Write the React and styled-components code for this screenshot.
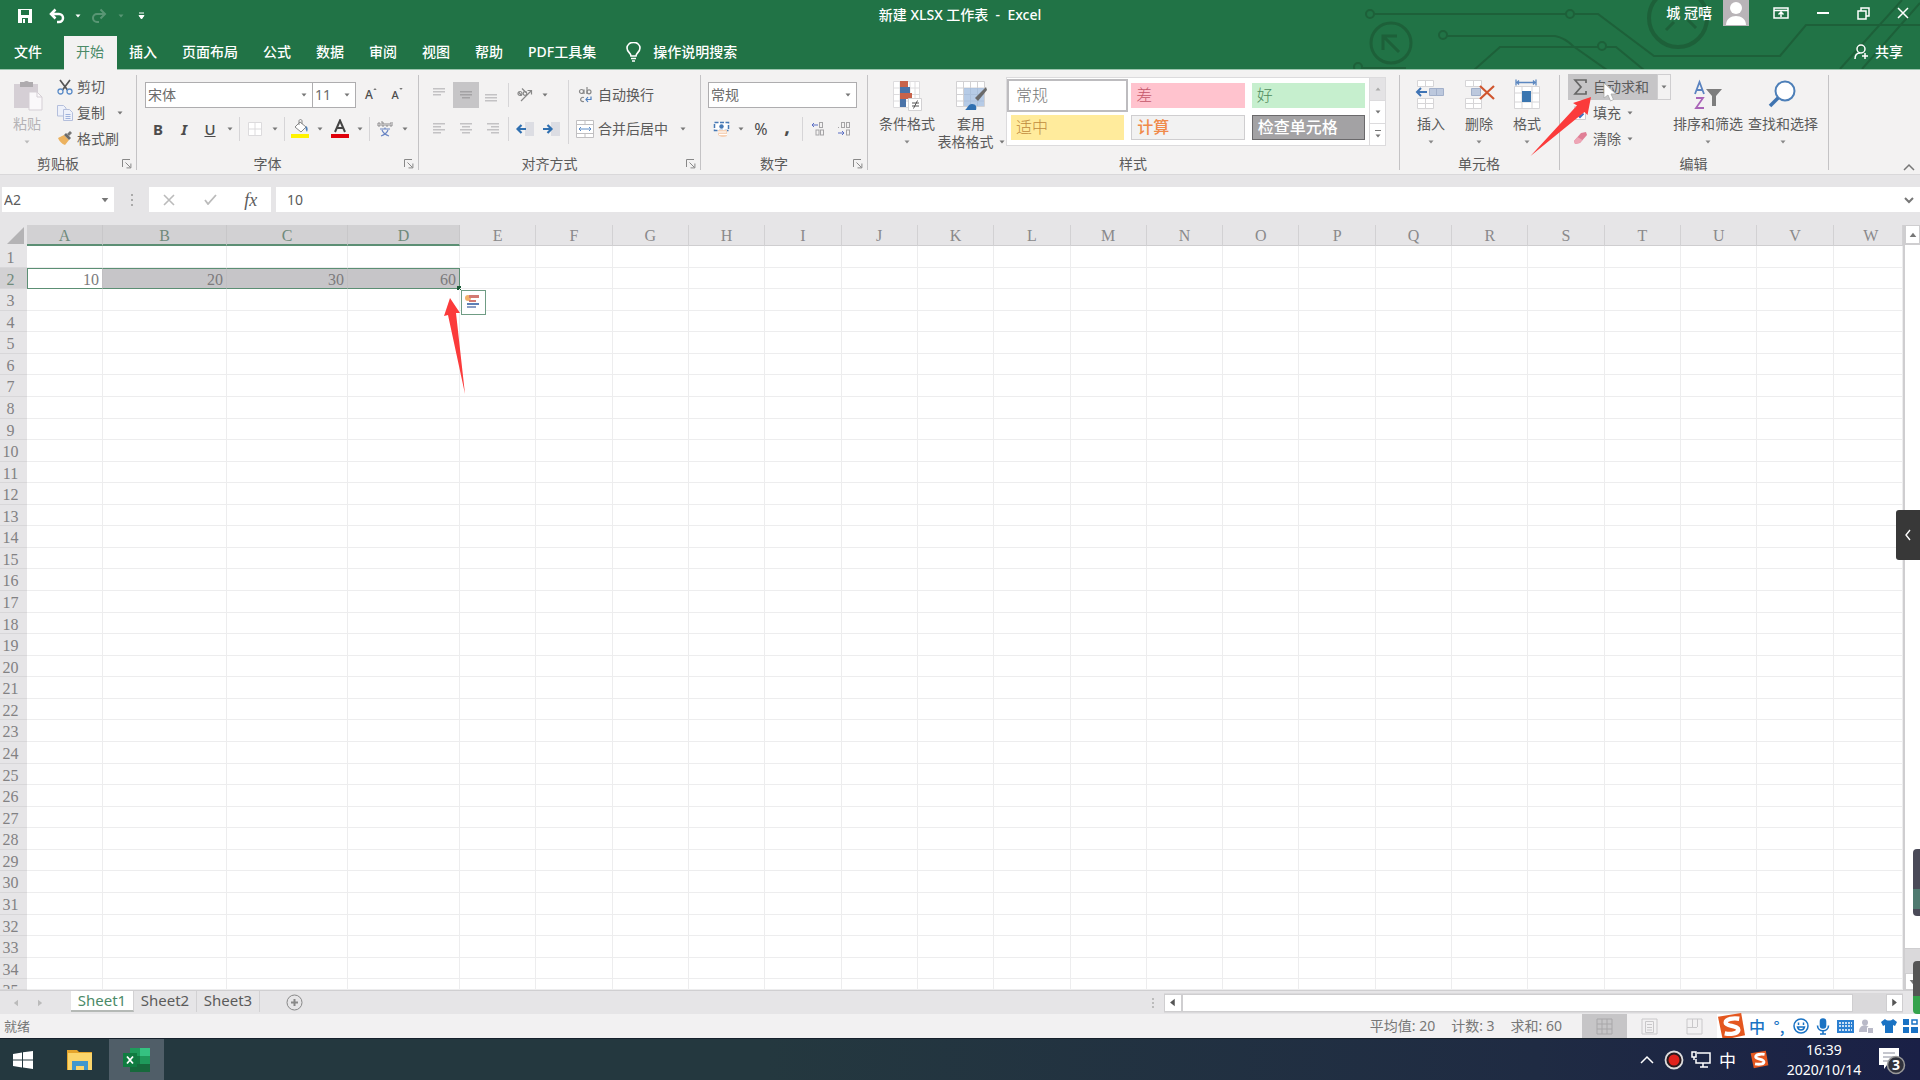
import React from "react";
import styled, { createGlobalStyle, css } from "styled-components";

const ui = '"Noto Sans", "Noto Sans CJK SC", sans-serif';
const song = '"Liberation Serif", "Noto Sans CJK SC", serif';
const green = "#217346";

const Global = createGlobalStyle`
  * { box-sizing: border-box; }
  html, body { margin: 0; height: 100%; overflow: hidden; }
  body { font: 14px/20px ${ui}; color: #5b5b5b; background: #e6e6e6; }
  button, input, select {
    font: inherit; color: inherit; border: 0; padding: 0; margin: 0;
    background: none; border-radius: 0; outline: none;
  }
  svg { display: block; flex: none; }
`;

const Window = styled.div`
  height: 100vh;
  display: flex;
  flex-direction: column;
  overflow: hidden;
`;

/* ---------- title and tabs ---------- */
const Header = styled.header`
  position: relative;
  height: 70px;
  flex: none;
  background: ${green};
  color: #fff;
  border-bottom: 1px solid #9cc5ae;
`;
const Circuit = styled.svg`
  position: absolute;
  right: 0;
  top: 0;
`;
const TitleBar = styled.div`
  position: relative;
  height: 36px;
  display: grid;
  grid-template-columns: 1fr auto 1fr;
`;
const QuickTools = styled.div`
  display: flex;
  align-items: center;
  height: 32px;
  padding-left: 13px;
`;
const QuickButton = styled.button`
  width: ${(p) => p.$w || 24}px;
  height: 24px;
  display: flex;
  align-items: center;
  justify-content: center;
  opacity: ${(p) => (p.disabled ? 0.25 : 1)};
  color: #fff;
`;
const Title = styled.h1`
  margin: 0;
  font: 500 14px/30px ${ui};
  white-space: pre;
`;
const WindowTools = styled.div`
  display: flex;
  justify-content: flex-end;
`;
const User = styled.span`
  line-height: 26px;
  font-weight: 500;
  margin-right: 11px;
`;
const WindowButton = styled.button`
  width: ${(p) => p.$w || 41}px;
  height: 26px;
  display: flex;
  align-items: center;
  justify-content: center;
`;
const TabBar = styled.nav`
  position: relative;
  height: 34px;
  display: flex;
`;
const Tab = styled.button`
  padding: 0 13px 2px 12px;
  font-weight: 500;
  white-space: nowrap;
  color: #fff;
  ${(p) => p.$file && css`width: 64px; padding: 0 0 2px 14px; text-align: left;`}
  ${(p) => p.$active && css`background: #f3f2f2; color: #4b8a68; font-weight: 400;`}
`;
const Search = styled.button`
  display: flex;
  align-items: center;
  gap: 12px;
  padding: 0 0 2px 17px;
  font-weight: 500;
  color: #fff;
`;
const Share = styled.button`
  display: flex;
  align-items: center;
  gap: 6px;
  margin-left: auto;
  padding: 0 17px 2px 0;
  font-weight: 500;
  color: #fff;
`;

/* ---------- ribbon ---------- */
const Ribbon = styled.section`
  position: relative;
  flex: none;
  height: 105px;
  display: flex;
  background: #f3f2f2;
  border-bottom: 1px solid #d9d8da;
`;
const Group = styled.div`
  width: ${(p) => p.$w}px;
  padding-left: ${(p) => p.$pad || 0}px;
  flex: none;
  position: relative;
  display: grid;
  grid-template-rows: 84px 20px;
  &::after {
    content: "";
    position: absolute;
    right: 0;
    top: 5px;
    bottom: 4px;
    width: 1px;
    background: #c4c3c5;
  }
`;
const GroupBody = styled.div`
  display: flex;
  align-items: flex-start;
`;
const GroupFoot = styled.div`
  display: flex;
  align-items: center;
  margin-left: ${(p) => -(p.$pad || 0)}px;
  padding-right: 2px;
`;
const GroupName = styled.span`
  flex: 1;
  text-align: center;
  padding-right: ${(p) => (p.$launch ? 3 : 0)}px;
`;
const Launcher = styled.button`
  width: 16px;
  height: 16px;
  display: flex;
  align-items: center;
  justify-content: center;
`;
const SmallStack = styled.div`
  padding-top: 4px;
  display: flex;
  flex-direction: column;
  align-items: flex-start;
`;
const SmallRow = styled.div`
  display: flex;
  height: 26px;
`;
const SmallButton = styled.button`
  display: flex;
  align-items: center;
  gap: 4px;
  height: 26px;
  padding: 0 ${(p) => p.$end || 2}px 0 3px;
  white-space: nowrap;
  background: ${(p) => (p.$active ? "#c6c5c7" : "none")};
`;
const SplitArrow = styled.button`
  width: 14px;
  height: 26px;
  border: 1px solid #cfced0;
  display: flex;
  align-items: center;
  justify-content: center;
`;
const BigButton = styled.button`
  width: ${(p) => p.$w}px;
  padding-top: 9px;
  display: flex;
  flex-direction: column;
  align-items: center;
  line-height: 18px;
  white-space: nowrap;
  color: ${(p) => (p.disabled ? "#b5b3b6" : "#5b5b5b")};
  & > svg { margin-bottom: 4px; }
`;
const BigLine = styled.span`
  height: 18px;
  display: flex;
  align-items: center;
  gap: 5px;
`;
const Rows = styled.div`
  padding-top: 12px;
  display: flex;
  flex-direction: column;
  gap: 8px;
`;
const ToolRow = styled.div`
  display: flex;
  align-items: center;
  height: 26px;
`;
const Tool = styled.button`
  width: ${(p) => p.$w || 26}px;
  height: 26px;
  display: flex;
  align-items: center;
  justify-content: center;
  background: ${(p) => (p.$active ? "#c6c5c7" : "none")};
  font: ${(p) => p.$font || "400 16px/20px"} ${ui};
  color: #4c4c4c;
  padding-bottom: ${(p) => p.$lift || 0}px;
`;
const SizeMark = styled.span`
  align-self: flex-start;
  padding-top: 5px;
`;
const Sep = styled.i`
  width: 1px;
  height: 24px;
  margin: 0 ${(p) => p.$m || 2}px;
  background: #d6d5d7;
`;
const TallSep = styled.i`
  width: 1px;
  height: 64px;
  margin: 10px 4px 0;
  background: #d6d5d7;
`;
const SelectBox = styled.div`
  width: ${(p) => p.$w}px;
  height: 26px;
  border: 1px solid #aeadaf;
  background: #fff;
  display: grid;
  align-items: center;
  & > * { grid-area: 1 / 1; }
  & > svg { justify-self: end; margin-right: 5px; pointer-events: none; }
  & + & { border-left-width: 0; }
`;
const Select = styled.select`
  appearance: none;
  width: 100%;
  height: 24px;
  padding-left: 2px;
  color: #6b6b6b;
`;
const Gallery = styled.div`
  width: 380px;
  height: 69px;
  margin: 7px 0 0 2px;
  border: 1px solid #dcdbdd;
  background: #fff;
  display: flex;
`;
const GalleryGrid = styled.div`
  flex: 1;
  padding: 5px 4px;
  display: grid;
  grid-template-columns: repeat(3, 1fr);
  grid-template-rows: repeat(2, 25px);
  gap: 7px;
`;
const StyleCell = styled.button`
  text-align: left;
  padding-left: 5px;
  font: 300 16px/22px ${song};
  white-space: nowrap;
  background: ${(p) => p.$bg};
  color: ${(p) => p.$fg};
  font-weight: ${(p) => (p.$bold ? 500 : 300)};
  border: ${(p) => (p.$line ? `1px solid ${p.$line}` : 0)};
  ${(p) => p.$active && css`outline: 2px solid #bdbcbf; outline-offset: 2px;`}
`;
const GalleryScroll = styled.div`
  width: 16px;
  display: grid;
  grid-template-rows: repeat(3, 1fr);
  border-left: 1px solid #dcdbdd;
`;
const ScrollStep = styled.button`
  display: flex;
  flex-direction: column;
  align-items: center;
  justify-content: center;
  gap: 2px;
  background: ${(p) => (p.disabled ? "#e4e3e5" : "#fff")};
  & + & { border-top: 1px solid #dcdbdd; }
`;
const Collapse = styled.button`
  position: absolute;
  right: 2px;
  bottom: 0;
  width: 16px;
  height: 14px;
`;

/* ---------- formula bar ---------- */
const FormulaBar = styled.div`
  flex: none;
  height: 50px;
  padding: 12px 0 13px 2px;
  display: flex;
  background: #e6e5e7;
`;
const NameBox = styled.label`
  width: 112px;
  background: #fff;
  display: flex;
  align-items: center;
  padding: 0 5px 0 2px;
  & input { flex: 1; min-width: 0; }
`;
const Dots = styled.div`
  width: ${(p) => p.$w || 35}px;
  display: flex;
  align-items: center;
  justify-content: center;
`;
const FormulaTools = styled.div`
  width: 122px;
  margin-right: 5px;
  background: #fff;
  display: flex;
`;
const FormulaTool = styled.button`
  flex: 1;
  display: flex;
  align-items: center;
  justify-content: center;
  font: italic 18px/24px "Liberation Serif", serif;
`;
const FormulaField = styled.label`
  flex: 1;
  background: #fff;
  display: flex;
  align-items: center;
  padding: 0 5px 0 11px;
  & input { flex: 1; }
`;

/* ---------- sheet ---------- */
const SheetArea = styled.main`
  flex: 1;
  min-height: 0;
  display: flex;
  background: #e6e5e7;
`;
const SheetTable = styled.table`
  flex: 1;
  min-width: 0;
  display: grid;
  grid-template-rows: 21px minmax(0, 1fr);
  font: 16px/20px ${song};
  color: #828183;
  overflow: hidden;
  background: #fff;
`;
const columns = css`
  display: grid;
  grid-template-columns: 27px 76px 124px 121px 112px repeat(18, minmax(0, 11fr)) minmax(0, 10fr);
`;
const HeadGroup = styled.thead`display: block;`;
const HeadRow = styled.tr`
  ${columns}
  grid-template-rows: 21px;
`;
const ColHead = styled.th`
  padding: 2px 0 0;
  font-weight: 400;
  line-height: 17px;
  text-align: center;
  background: ${(p) => (p.$sel ? "#d2d1d3" : "#e6e5e7")};
  color: ${(p) => (p.$sel ? "#6f8a7b" : "#8a898b")};
  border-right: 1px solid ${(p) => (p.$sel ? "#c8c7c9" : "#d2d1d3")};
  border-bottom: ${(p) => (p.$sel ? "2px solid #5c8f74" : "1px solid #cfced0")};
  &:last-child { padding-left: 6px; }
`;
const Corner = styled.th`
  padding: 2px 2px 0 7px;
  background: #e6e5e7;
`;
const Body = styled.tbody`
  display: grid;
  grid-template-rows: repeat(34, minmax(0, 2fr)) minmax(0, 1fr);
  min-height: 0;
`;
const BodyRow = styled.tr`
  ${columns}
  grid-template-rows: 100%;
  min-height: 0;
`;
const RowHead = styled.th`
  padding: 0 6px 0 0;
  font-weight: 400;
  text-align: center;
  line-height: 23px;
  min-height: 0;
  overflow: hidden;
  background: ${(p) => (p.$sel ? "#d2d1d3" : "#e6e5e7")};
  color: ${(p) => (p.$sel ? "#6f8a7b" : "#828183")};
  border-bottom: 1px solid #d8d7d9;
`;
const Cell = styled.td`
  position: relative;
  padding: 0 3px;
  text-align: right;
  line-height: 24px;
  min-height: 0;
  border-right: 1px solid #ededee;
  border-bottom: 1px solid #ededee;
  ${(p) => p.$sel && css`
    background: ${p.$first ? "#fff" : "#c6c5c8"};
    color: #7b7a7c;
    border-right-color: ${p.$last ? "#5c8f74" : "#c0bfc2"};
    border-top: 1px solid #5c8f74;
    border-bottom: 1px solid #5c8f74;
    line-height: 21px;
    ${p.$first && "border-left: 1px solid #5c8f74;"}
  `}
`;
const FillHandle = styled.i`
  position: absolute;
  right: -2px;
  bottom: -2px;
  width: 4px;
  height: 4px;
  background: #1d5c3a;
`;
const QuickAnalysis = styled.button`
  position: absolute;
  left: calc(100% + 2px);
  top: calc(100% + 2px);
  width: 25px;
  height: 25px;
  padding: 0 3px 4px;
  z-index: 2;
  background: #fff;
  border: 1px solid #6f9c84;
`;
const VScroll = styled.div`
  width: 17px;
  flex: none;
  display: flex;
  flex-direction: column;
  background: #dad9db;
  border-left: 2px solid #cfced0;
`;
const VThumb = styled.div`
  flex: 1;
  margin-bottom: 24px;
  background: #fff;
  border: 1px solid #cfced0;
  border-width: 1px 0;
`;
const ScrollArrow = styled.button`
  width: ${(p) => p.$w || 17}px;
  height: ${(p) => p.$h || 17}px;
  flex: none;
  background: #fff;
  display: flex;
  align-items: center;
  justify-content: center;
  border: 1px solid #cfced0;
`;

/* ---------- sheet tabs and status ---------- */
const SheetBar = styled.div`
  flex: none;
  height: 24px;
  display: flex;
  align-items: stretch;
  padding-right: 17px;
  background: #e6e5e7;
  border-top: 1px solid #d0cfd1;
`;
const SheetArrows = styled.div`
  width: 71px;
  display: flex;
  align-items: center;
  gap: 16px;
  padding-left: 12px;
`;
const SheetTab = styled.button`
  width: 63px;
  height: 21px;
  font-size: 15px;
  line-height: 17px;
  padding-bottom: 2px;
  border-right: 1px solid #d2d1d3;
  ${(p) => p.$active && css`
    background: #fff;
    color: #4b8a68;
    padding-bottom: 0;
    border-bottom: 2px solid #b5b9b6;
  `}
`;
const AddSheet = styled.button`
  padding-left: 26px;
`;
const HScroll = styled.div`
  width: 40%;
  margin-left: auto;
  display: flex;
  align-items: center;
`;
const HTrack = styled.div`
  flex: 1;
  height: 20px;
  display: flex;
  align-items: center;
  background: #dad9db;
`;
const HThumb = styled.div`
  flex: 1;
  height: 18px;
  margin-right: 33px;
  background: #fff;
  border: 1px solid #cfced0;
`;
const StatusBar = styled.footer`
  flex: none;
  height: 24px;
  display: flex;
  align-items: center;
  padding-left: 4px;
  background: #f2f1f2;
  color: #777;
`;
const Ready = styled.span`flex: 1; font-size: 13px;`;
const Stats = styled.div`
  display: flex;
  gap: 16px;
  margin-right: 20px;
`;
const ViewButton = styled.button`
  width: 45px;
  height: 24px;
  display: flex;
  align-items: center;
  justify-content: center;
  background: ${(p) => (p.$active ? "#c6c5c7" : "none")};
`;
const InputBar = styled.div`
  height: 24px;
  display: flex;
  align-items: center;
  background: #fff;
`;
const InputItem = styled.button`
  width: ${(p) => p.$w || 22}px;
  height: 24px;
  display: flex;
  align-items: center;
  justify-content: center;
  color: #1a73c4;
  font: 500 16px/24px "Noto Sans CJK SC", sans-serif;
  white-space: nowrap;
`;

/* ---------- taskbar ---------- */
const Taskbar = styled.div`
  flex: none;
  height: 42px;
  display: flex;
  color: #fff;
  background: linear-gradient(90deg, #24383f 0%, #24383f 40%, #1f2b43 80%, #1a2046 100%);
  border-top: 1px solid #16202c;
`;
const TaskButton = styled.button`
  width: ${(p) => p.$w}px;
  display: flex;
  align-items: center;
  justify-content: center;
  padding-left: ${(p) => p.$pad || 0}px;
  background: ${(p) => (p.$active ? "#505e68" : "none")};
`;
const Tray = styled.div`
  margin-left: auto;
  display: flex;
  align-items: stretch;
`;
const TrayItem = styled.button`
  width: ${(p) => p.$w || 27}px;
  padding-right: ${(p) => p.$end || 0}px;
  display: flex;
  align-items: center;
  justify-content: center;
  color: #fff;
  font: 400 17px/24px "Noto Sans CJK SC", sans-serif;
`;
const Clock = styled.time`
  width: 94px;
  padding-top: 1px;
  text-align: center;
  line-height: 20px;
`;

/* ---------- floating items ---------- */
const SideToggle = styled.button`
  position: fixed;
  right: 0;
  top: 510px;
  width: 24px;
  height: 50px;
  display: flex;
  align-items: center;
  justify-content: center;
  background: #383838;
  border-radius: 3px 0 0 3px;
`;
const EdgeWidget = styled.div`
  position: fixed;
  right: 0;
  top: ${(p) => p.$top}px;
  width: 7px;
  height: ${(p) => p.$h}px;
  border-radius: 4px 0 0 4px;
  background: ${(p) => p.$bg};
`;
const Mark = styled.svg`
  position: fixed;
  left: ${(p) => p.$x}px;
  top: ${(p) => p.$y}px;
  pointer-events: none;
`;

/* ---------- drawings ---------- */
const Caret = ({ color = "#777", s = 5, dir = "down" }) => {
  const r = { down: 0, up: 180, left: 90, right: 270 }[dir];
  return (
    <svg width={s + 1} height={s + 1} viewBox="0 0 6 6">
      <path d="M0.5 1.5h5L3 4.6z" fill={color} transform={`rotate(${r} 3 3)`} />
    </svg>
  );
};
const Lines = ({ ws, y = 3, align = "left", w = 14, color = "#c3c2c4" }) => (
  <svg width={w} height="14">
    {ws.map((v, i) => (
      <rect key={i} x={align === "left" ? 0 : align === "right" ? w - v : (w - v) / 2} y={y + i * 3} width={v} height="1.5" fill={color} />
    ))}
  </svg>
);
const LaunchIcon = () => (
  <svg width="10" height="10" fill="none" stroke="#888" strokeWidth="1">
    <path d="M.5 8V.5H8M3.5 3.5l5 5M8.9 4.5v4.4H4.5" />
  </svg>
);
const Paste = () => (
  <svg width="32" height="32" viewBox="0 0 32 32">
    <path d="M3 5h24v24H3z" fill="#d5cfd5" />
    <path d="M9 3h4a3 2.5 0 0 1 5 0h4v5H9z" fill="#aeabae" />
    <path d="M18 13h8l5 5v13H18z" fill="#faf8fa" stroke="#d5cfd5" />
    <path d="M26 13v5h5" fill="none" stroke="#d5cfd5" />
  </svg>
);
const Scissors = () => (
  <svg width="16" height="16" viewBox="0 0 16 16" fill="none">
    <path d="M3 1l7.5 10M13 1L5.500 11" stroke="#555" strokeWidth="1.7" />
    <circle cx="3.500" cy="12.500" r="2.500" stroke="#5b8cc8" strokeWidth="1.300" />
    <circle cx="12.500" cy="12.500" r="2.500" stroke="#5b8cc8" strokeWidth="1.300" />
  </svg>
);
const Copy = () => (
  <svg width="16" height="16" viewBox="0 0 16 16" fill="#eef1fa" stroke="#b4bfdc">
    <path d="M.5.500h6l2.500 2.500v8h-8.500z" />
    <path d="M6.500 4.500h6l3 3v8h-9z" />
    <path d="M8.500 9.500h5M8.500 11.500h5M8.500 13.500h5" stroke="#9fb2dc" />
  </svg>
);
const Brush = () => (
  <svg width="16" height="16" viewBox="0 0 16 16">
    <path d="M1 7l6-3 5 5-4 5c-3-1-6-4-7-7z" fill="#ecb25f" />
    <path d="M7 4l2-2 5 5-2 2z" fill="#6b6b6b" />
    <path d="M10 3l3-3 2 2-3 3z" fill="#777" />
  </svg>
);
const Borders = () => (
  <svg width="16" height="16" fill="#fff" stroke="#dcdbdd"><path d="M1.500 1.500h13v13h-13zM8 1.500v13M1.500 8h13" /></svg>
);
const Bucket = () => (
  <svg width="20" height="20" viewBox="0 0 20 20">
    <path d="M5 8l5-5 6 5-5 5z" fill="#fff" stroke="#888" />
    <path d="M9 6V2c0-2 3-2 3 0v3" fill="none" stroke="#888" />
    <path d="M16 7c2 1 2 4 1 6-1-2-2-3-1-6z" fill="#4d7fb8" />
    <path d="M1 15h18v4H1z" fill="#fff200" />
  </svg>
);
const Phonetic = () => (
  <svg width="16" height="18" viewBox="0 0 16 18" fill="none">
    <path d="M1 3h2v3H1zM5 1v5h2V3H5M9 3v3h2V3M14 3h-1v3h2V2" stroke="#8c8b8d" />
    <path d="M3 9h10M8 7.500v2M5 10c1 3 4 5 7 6M11 10c-1 3-4 5-7 6" stroke="#6a86c4" strokeWidth="1.200" />
  </svg>
);
const Orient = () => (
  <svg width="18" height="16" viewBox="0 0 18 16" fill="none" stroke="#888" strokeWidth="1.200">
    <path d="M5 14L15 4M11.500 3.500H15.500V7.500" />
    <circle cx="4" cy="6.500" r="2" /><path d="M5.500 8.500L2.500 5M6 1.500L10 5.500" /><circle cx="9" cy="6.500" r="1.800" />
  </svg>
);
const Indent = ({ right }) => (
  <svg width="18" height="16" viewBox="0 0 18 16">
    <path d="M9 1h9v14H9z" fill="#dcdde3" />
    <path d={right ? "M1 8h8M5.500 4l4 4-4 4" : "M10 8H2M5.500 4l-4 4 4 4"} stroke="#2f6fb0" strokeWidth="2.200" fill="none" />
  </svg>
);
const Wrap = () => (
  <svg width="18" height="18" viewBox="0 0 18 18" fill="none" stroke="#888" strokeWidth="1.200">
    <circle cx="5.500" cy="5.500" r="2" /><path d="M8 3.500V8M11 1v7" /><circle cx="13" cy="5.800" r="2" />
    <path d="M8 11.500c-4-1.500-5 5 0 4" /><path d="M15 10.500v3h-5M12 11l-2 2.500 2 2.500" stroke="#4d7fc0" />
  </svg>
);
const Merge = () => (
  <svg width="18" height="18" viewBox="0 0 18 18" fill="none" stroke="#c0bfc1">
    <path d="M.5.500h17v17H.5zM.5 4.500h17M.5 13.500h17M9 .500v4M9 13.500v4" fill="#fff" />
    <path d="M3 9h12M5 7L3 9l2 2M13 7l2 2-2 2" stroke="#5b8cc8" />
  </svg>
);
const Currency = () => (
  <svg width="17" height="18" viewBox="0 0 17 18">
    <path d="M1.500 2.500h14v8h-14z" fill="#fff" stroke="#4679b5" strokeWidth="1.500" strokeDasharray="4 1.500" />
    <circle cx="8.500" cy="6.500" r="2.200" fill="#4679b5" />
    <path d="M5 10h9v6c-3 2-7 1-9-1z" fill="#f6d3b8" />
    <path d="M5 12h8M6 14.500h8" stroke="#fff" />
  </svg>
);
const Decimals = ({ less }) => (
  <svg width="14" height="14" viewBox="0 0 14 14" fill="none" stroke="#a5a4a6">
    {less ? (
      <><rect x="4.500" y=".5" width="3" height="5" /><rect x="9.500" y=".5" width="3" height="5" /><rect x="9.500" y="8" width="3" height="5" /><path d="M1.500 5v1" /><path d="M1 11h6M5 9l2 2-2 2" stroke="#5a6fc4" /></>
    ) : (
      <><rect x="8.500" y=".5" width="3" height="5" /><rect x="5" y="8" width="3" height="5" /><rect x="9.500" y="8" width="3" height="5" /><path d="M1 3h6M3 1L1 3l2 2" stroke="#5a6fc4" /></>
    )}
  </svg>
);
const Cond = () => (
  <svg width="32" height="32" viewBox="0 0 32 32">
    <path d="M2.500 2.500h26v26h-26zM2.500 9h26M2.500 15.500h26M2.500 22h26M9 2.500v26M19 2.500v26M24 2.500v26" fill="#fff" stroke="#dddcde" />
    <path d="M9 2h8v6H9z" fill="#c8634a" /><path d="M9 8h10v6H9z" fill="#4a73a8" /><path d="M9 14h12v6H9z" fill="#c8634a" /><path d="M9 20h6v8H9z" fill="#4a73a8" />
    <path d="M17.500 19.500h13v12h-13z" fill="#fff" stroke="#d2d1d3" />
    <path d="M21 24h7M21 27h7M26.500 21.500l-4 8" stroke="#555" fill="none" />
  </svg>
);
const FormatTable = () => (
  <svg width="32" height="32" viewBox="0 0 32 32">
    <path d="M1.500 2.500h28v25h-28zM1.500 9h28M1.500 15.500h28M1.500 22h28M8.500 2.500v25M15.500 2.500v25M22.500 2.500v25" fill="#fff" stroke="#d2d1d3" />
    <path d="M9 9h20v18H9z" fill="#9db9de" opacity=".75" />
    <path d="M31 8L20 19l3 3 9-11z" fill="#6a6a6a" />
    <path d="M10 31c2-1 3-6 7-6s5 3 4 6z" fill="#2f6fb0" />
  </svg>
);
const CellsIcon = ({ kind }) => (
  <svg width="32" height="32" viewBox="0 0 32 32">
    {kind === "format" ? (
      <>
        <path d="M3.500 7.500h25v22h-25zM3.500 14h25M3.500 23h25M11 7.500v22M21 7.500v22" fill="#fff" stroke="#d6d5d7" />
        <path d="M11 12h9v11h-9z" fill="#3b76b0" />
        <path d="M5 3.500h20M5 .500v6M25 .500v6M8 1.500l-2 2 2 2M22 1.500l2 2-2 2" stroke="#5b87c0" strokeWidth="1.300" fill="none" />
      </>
    ) : (
      <>
        <path d="M2.500 1.500h16v6h-16zM10.500 1.500v6M2.500 19.500h16v10h-16zM10.500 19.500v10M2.500 24.500h16" fill="#fff" stroke="#d6d5d7" />
        {kind === "insert" ? (
          <><path d="M14.500 9.500h14v7h-14z" fill="#bcc8dd" stroke="#a2b0ca" /><path d="M21.500 9.500v7" stroke="#a2b0ca" /><path d="M12 13H2M6 9l-4 4 4 4" stroke="#3f74b5" strokeWidth="2" fill="none" /></>
        ) : (
          <><path d="M8.500 9.500h9v7h-9z" fill="#bcc8dd" stroke="#a2b0ca" /><path d="M17 7l14 13M31 7L17 20" stroke="#d0562f" strokeWidth="2.200" /></>
        )}
      </>
    )}
  </svg>
);
const Sigma = () => (
  <svg width="18" height="18" viewBox="0 0 18 18" fill="none" stroke="#666" strokeWidth="1.700"><path d="M15 5V2H4l6 7-6 7h11v-3" /></svg>
);
const Fill = () => (
  <svg width="18" height="16" viewBox="0 0 18 16"><path d="M3.500 1.500h11v13h-11z" fill="#fff" stroke="#cfced0" /><path d="M9 4v8M5.500 8.500L9 12l3.500-3.500" stroke="#3f6fc0" strokeWidth="2" fill="none" /></svg>
);
const Eraser = () => (
  <svg width="18" height="16" viewBox="0 0 18 16"><path d="M10 2l5-1 1 3-7 8-5 1-1-3z" fill="#e07f96" /><path d="M6.500 6l5 3-3 3-4.500 1-1-3z" fill="#eea5b5" /></svg>
);
const SortIcon = () => (
  <svg width="32" height="32" viewBox="0 0 32 32" fill="none">
    <path d="M3 15L7.500 3l4.500 12M5 11h5" stroke="#5a83c0" strokeWidth="1.800" />
    <path d="M4 19h7L4 29h8" stroke="#a964b8" strokeWidth="1.800" />
    <path d="M14 10h16l-6 7v10h-4V17z" fill="#7d7d7d" />
  </svg>
);
const FindIcon = () => (
  <svg width="32" height="32" viewBox="0 0 32 32" fill="none">
    <circle cx="18" cy="12" r="9.500" fill="#fff" stroke="#4d7fb8" strokeWidth="2" />
    <path d="M11 19L3 27" stroke="#3f74b0" strokeWidth="3.500" />
  </svg>
);
const Sogou = ({ s }) => (
  <svg width={s} height={s} viewBox="0 0 30 30">
    <path d="M1 5L25 1l4 23-23 5z" fill="#e4571f" />
    <path d="M23 7c-6-1-14 0-14 4s14 3 13 8c-1 4-9 4-14 3" fill="none" stroke="#fff" strokeWidth="4.500" />
  </svg>
);

const letters = "ABCDEFGHIJKLMNOPQRSTUVW".split("");
const data = { "A2": 10, "B2": 20, "C2": 30, "D2": 60 };
const tabs = ["文件", "开始", "插入", "页面布局", "公式", "数据", "审阅", "视图", "帮助", "PDF工具集"];

const RibbonGroup = ({ w, pad, name, launch, children }) => (
  <Group $w={w} $pad={pad}>
    <GroupBody>{children}</GroupBody>
    <GroupFoot $pad={pad}>
      <GroupName $launch={launch}>{name}</GroupName>
      {launch && <Launcher aria-label={`${name}设置`}><LaunchIcon /></Launcher>}
    </GroupFoot>
  </Group>
);
const Drop = ({ label, w, options }) => (
  <SelectBox $w={w}>
    <Select aria-label={label}>{options.map((o) => <option key={o}>{o}</option>)}</Select>
    <Caret />
  </SelectBox>
);
const Big = ({ w, icon, label, disabled }) => (
  <BigButton $w={w} disabled={disabled}>{icon}<BigLine>{label}</BigLine><BigLine><Caret color={disabled ? "#bbb" : "#888"} /></BigLine></BigButton>
);
const Arrow = () => <Tool $w={14} aria-label="更多"><Caret /></Tool>;

export default function App() {
  return (
    <Window>
      <Global />
      <Header>
        <Circuit width="570" height="69" viewBox="1350 0 570 69" fill="none" stroke="#1d6039" strokeWidth="2" aria-hidden="true">
          <circle cx="1370" cy="14" r="4" /><path d="M1374 14H1566" />
          <circle cx="1570" cy="14" r="4" /><path d="M1574 14h24l56 42h126l26-31h114" />
          <circle cx="1391" cy="43" r="20" strokeWidth="3" /><path d="M1399 52l-15-15M1383 50V36h14" strokeWidth="3" />
          <circle cx="1443" cy="35" r="4" /><path d="M1447 36h108q10 2 18 10l34 24" />
          <path d="M1474 70l26-23h98" /><circle cx="1602" cy="46" r="4" /><path d="M1606 47h10l28 23" />
          <circle cx="1358" cy="67" r="4" /><path d="M1362 68h44" />
          <circle cx="1678" cy="18" r="29" strokeWidth="4" /><path d="M1666 30l8-8M1696 28l-8-8" strokeWidth="3" />
          <path d="M1840 69l62-69M1862 69l58-66" />
        </Circuit>
        <TitleBar>
          <QuickTools>
            <QuickButton aria-label="保存">
              <svg width="14" height="14"><path d="M0 0h14v14H0z" fill="#fff" /><path d="M3 1h8v5H3zM4 9h6v5H4z" fill={green} /><path d="M5 10h2v4H5z" fill="#fff" /></svg>
            </QuickButton>
            <QuickButton $w={40} aria-label="撤消">
              <svg width="16" height="16" fill="none" stroke="#fff" strokeWidth="2.500"><path d="M2 6h8a4 4 0 0 1 0 8H8M6.500 1.500L2 6l4.500 4.500" /></svg>
            </QuickButton>
            <QuickButton $w={1} aria-label="撤消选项"><Caret color="#fff" /></QuickButton>
            <QuickButton $w={42} disabled aria-label="恢复">
              <svg width="16" height="16" fill="none" stroke="#fff" strokeWidth="2"><path d="M14 6H6a4 4 0 0 0 0 8h2M9.500 1.500L14 6l-4.500 4.500" /></svg>
            </QuickButton>
            <QuickButton $w={1} disabled aria-label="恢复选项"><Caret color="#fff" /></QuickButton>
            <QuickButton $w={40} aria-label="自定义快速访问工具栏">
              <svg width="7" height="8"><path d="M1 1h5M1 3.500h5L3.500 7z" stroke="#fff" strokeWidth="1" fill="#fff" /></svg>
            </QuickButton>
          </QuickTools>
          <Title>新建 XLSX 工作表  -  Excel</Title>
          <WindowTools>
            <User>城 冠嘻</User>
            <svg width="26" height="26"><path d="M0 0h26v26H0z" fill="#b9b4b8" /><circle cx="13" cy="8" r="6" fill="#fff" /><path d="M3 25c0-12 20-12 20 0z" fill="#fff" /></svg>
            <WindowButton $w={64} aria-label="功能区显示选项">
              <svg width="16" height="12" fill="none" stroke="#fff" strokeWidth="1.500"><path d="M1 1h14v10H1zM1 3.500h14M8 10V5.500M5.500 7.500L8 5l2.500 2.500" /></svg>
            </WindowButton>
            <WindowButton $w={20} aria-label="最小化"><svg width="12" height="2"><path d="M0 0h12v2H0z" fill="#fff" /></svg></WindowButton>
            <WindowButton $w={61} aria-label="向下还原">
              <svg width="13" height="13" fill="none" stroke="#fff" strokeWidth="1.500"><path d="M1 4h8v8H1zM4 4V1h8v8H9" /></svg>
            </WindowButton>
            <WindowButton $w={26} aria-label="关闭">
              <svg width="20" height="12" fill="none" stroke="#fff" strokeWidth="1.500"><path d="M1 1l10 10M11 1L1 11" /></svg>
            </WindowButton>
          </WindowTools>
        </TitleBar>
        <TabBar>
          {tabs.map((t, i) => <Tab key={t} $file={i === 0} $active={i === 1}>{t}</Tab>)}
          <Search>
            <svg width="15" height="20" fill="none" stroke="#fff" strokeWidth="1.600"><path d="M5 14c0-3-4-4-4-8a6.300 5.500 0 0 1 13 0c0 4-4 5-4 8zM5 16.500h5M6 19h3" /></svg>
            操作说明搜索
          </Search>
          <Share>
            <svg width="15" height="16" fill="none" stroke="#fff" strokeWidth="1.500"><circle cx="7" cy="5" r="4" /><path d="M1 15c0-4 2-6 5-6M11 9v6M8 12h6" /></svg>
            共享
          </Share>
        </TabBar>
      </Header>

      <Ribbon>
        <RibbonGroup w={137} pad={0} name="剪贴板" launch>
          <Big w={54} icon={<Paste />} label="粘贴" disabled />
          <SmallStack>
            <SmallButton><Scissors />剪切</SmallButton>
            <SmallRow><SmallButton $end={8}><Copy />复制</SmallButton><Arrow /></SmallRow>
            <SmallButton><Brush />格式刷</SmallButton>
          </SmallStack>
        </RibbonGroup>
        <RibbonGroup w={282} pad={8} name="字体" launch>
          <Rows>
            <ToolRow>
              <Drop label="字体" w={168} options={["宋体"]} />
              <Drop label="字号" w={43} options={["11"]} />
              <Tool $w={30} $font="500 12px/20px">A<SizeMark><Caret dir="up" s={3} /></SizeMark></Tool>
              <Tool $w={22} $font="500 11px/20px">A<SizeMark><Caret s={3} /></SizeMark></Tool>
            </ToolRow>
            <ToolRow>
              <Tool $font="700 15px/20px">B</Tool>
              <Tool $font="italic 700 15px/20px"><i>I</i></Tool>
              <Tool $font="500 15px/20px"><u>U</u></Tool>
              <Arrow /><Sep />
              <Tool aria-label="边框"><Borders /></Tool><Arrow /><Sep />
              <Tool aria-label="填充颜色"><Bucket /></Tool><Arrow />
              <Tool aria-label="字体颜色">
                <svg width="18" height="20" fill="none"><path d="M4 13L9 1.500 14 13M6 9h6" stroke="#444" strokeWidth="2" /><path d="M0 15h18v4H0z" fill="#e0000b" /></svg>
              </Tool>
              <Arrow /><Sep />
              <Tool aria-label="拼音"><Phonetic /></Tool><Arrow />
            </ToolRow>
          </Rows>
        </RibbonGroup>
        <RibbonGroup w={282} pad={8} name="对齐方式" launch>
          <Rows>
            <ToolRow>
              <Tool aria-label="顶端对齐"><Lines ws={[12, 12, 8]} y={0} /></Tool>
              <Tool $active aria-label="垂直居中"><Lines ws={[12, 12, 8]} align="center" color="#a3a2a4" /></Tool>
              <Tool aria-label="底端对齐"><Lines ws={[12, 12, 12]} y={6} /></Tool>
              <Sep $m={3} />
              <Tool aria-label="方向"><Orient /></Tool><Arrow />
            </ToolRow>
            <ToolRow>
              <Tool aria-label="左对齐"><Lines ws={[12, 8, 12, 8]} y={1} /></Tool>
              <Tool aria-label="居中"><Lines ws={[12, 8, 12, 8]} y={1} align="center" /></Tool>
              <Tool aria-label="右对齐"><Lines ws={[12, 8, 12, 8]} y={1} align="right" /></Tool>
              <Sep $m={3} />
              <Tool aria-label="减少缩进量"><Indent /></Tool>
              <Tool aria-label="增加缩进量"><Indent right /></Tool>
            </ToolRow>
          </Rows>
          <TallSep />
          <Rows>
            <SmallButton><Wrap />自动换行</SmallButton>
            <SmallRow><SmallButton $end={8}><Merge />合并后居中</SmallButton><Arrow /></SmallRow>
          </Rows>
        </RibbonGroup>
        <RibbonGroup w={167} pad={7} name="数字" launch>
          <Rows>
            <Drop label="数字格式" w={149} options={["常规"]} />
            <ToolRow>
              <Tool aria-label="会计数字格式"><Currency /></Tool><Arrow />
              <Tool>%</Tool>
              <Tool $font="700 20px/10px" $lift={6}>,</Tool>
              <Sep />
              <Tool aria-label="增加小数位数"><Decimals /></Tool>
              <Tool aria-label="减少小数位数"><Decimals less /></Tool>
            </ToolRow>
          </Rows>
        </RibbonGroup>
        <RibbonGroup w={532} pad={8} name="样式">
          <Big w={62} icon={<Cond />} label="条件格式" />
          <BigButton $w={66}><FormatTable /><BigLine>套用</BigLine><BigLine>表格格式<Caret /></BigLine></BigButton>
          <Gallery>
            <GalleryGrid>
              <StyleCell $bg="#fff" $fg="#777" $active>常规</StyleCell>
              <StyleCell $bg="#ffc3ce" $fg="#c4566a">差</StyleCell>
              <StyleCell $bg="#c6efce" $fg="#4f8a5c">好</StyleCell>
              <StyleCell $bg="#ffeb9c" $fg="#c08a3c">适中</StyleCell>
              <StyleCell $bg="#f2f2f2" $fg="#f08a4a" $line="#cfced0" $bold>计算</StyleCell>
              <StyleCell $bg="#a3a2a4" $fg="#fff" $line="#6a696b" $bold>检查单元格</StyleCell>
            </GalleryGrid>
            <GalleryScroll>
              <ScrollStep disabled aria-label="上一行"><Caret dir="up" color="#aaa" /></ScrollStep>
              <ScrollStep aria-label="下一行"><Caret /></ScrollStep>
              <ScrollStep aria-label="其他"><svg width="6" height="1"><path d="M0 0h6v1H0z" fill="#777" /></svg><Caret /></ScrollStep>
            </GalleryScroll>
          </Gallery>
        </RibbonGroup>
        <RibbonGroup w={160} pad={7} name="单元格">
          <Big w={48} icon={<CellsIcon kind="insert" />} label="插入" />
          <Big w={48} icon={<CellsIcon kind="delete" />} label="删除" />
          <Big w={48} icon={<CellsIcon kind="format" />} label="格式" />
        </RibbonGroup>
        <RibbonGroup w={269} pad={8} name="编辑">
          <SmallStack>
            <SmallRow><SmallButton $active $end={8}><Sigma />自动求和</SmallButton><SplitArrow aria-label="求和选项"><Caret /></SplitArrow></SmallRow>
            <SmallRow><SmallButton><Fill />填充</SmallButton><Arrow /></SmallRow>
            <SmallRow><SmallButton><Eraser />清除</SmallButton><Arrow /></SmallRow>
          </SmallStack>
          <Big w={74} icon={<SortIcon />} label="排序和筛选" />
          <Big w={76} icon={<FindIcon />} label="查找和选择" />
        </RibbonGroup>
        <Collapse aria-label="折叠功能区"><svg width="14" height="10" fill="none" stroke="#777" strokeWidth="1.500"><path d="M2 8l5-5 5 5" /></svg></Collapse>
      </Ribbon>

      <FormulaBar>
        <NameBox><input aria-label="名称框" defaultValue="A2" /><Caret s={7} /></NameBox>
        <Dots><svg width="2" height="12"><path d="M0 0h2v2H0zM0 5h2v2H0zM0 10h2v2H0z" fill="#aaa" /></svg></Dots>
        <FormulaTools>
          <FormulaTool aria-label="取消"><svg width="12" height="12" stroke="#bbb" strokeWidth="1.600"><path d="M1 1l10 10M11 1L1 11" /></svg></FormulaTool>
          <FormulaTool aria-label="输入"><svg width="13" height="11" fill="none" stroke="#bbb" strokeWidth="1.800"><path d="M1 6l3 4L12 1" /></svg></FormulaTool>
          <FormulaTool>fx</FormulaTool>
        </FormulaTools>
        <FormulaField><input aria-label="编辑栏" defaultValue="10" /><svg width="12" height="8" fill="none" stroke="#777" strokeWidth="2"><path d="M2 2l4 4 4-4" /></svg></FormulaField>
      </FormulaBar>

      <SheetArea>
        <SheetTable>
          <HeadGroup>
            <HeadRow>
              <Corner aria-label="全选"><svg width="17" height="17"><path d="M17 0v17H0z" fill="#b4b3b5" /></svg></Corner>
              {letters.map((l, i) => <ColHead key={l} scope="col" $sel={i < 4}>{l}</ColHead>)}
            </HeadRow>
          </HeadGroup>
          <Body>
            {Array.from({ length: 35 }, (_, r) => (
              <BodyRow key={r}>
                <RowHead scope="row" $sel={r === 1}>{r + 1}</RowHead>
                {letters.map((l, c) => {
                  const sel = r === 1 && c < 4;
                  const last = sel && c === 3;
                  return (
                    <Cell key={l} $sel={sel} $first={sel && c === 0} $last={last}>
                      {data[`${l}${r + 1}`]}
                      {last && (
                        <>
                          <FillHandle />
                          <QuickAnalysis aria-label="快速分析">
                            <svg width="16" height="14"><circle cx="3" cy="4" r="3" fill="#f3b06a" /><path d="M4 1h10v3H4z" fill="#d37a72" /><path d="M4 6h7v2H4z" fill="#d37a72" /><path d="M2 9h12v2H2z" fill="#5d7fb5" /><path d="M2 12h9v2H2z" fill="#8a9dc4" /></svg>
                          </QuickAnalysis>
                        </>
                      )}
                    </Cell>
                  );
                })}
              </BodyRow>
            ))}
          </Body>
        </SheetTable>
        <VScroll>
          <ScrollArrow $w={15} $h={19} aria-label="向上滚动"><Caret dir="up" s={7} /></ScrollArrow>
          <VThumb />
          <ScrollArrow $w={15} $h={17} aria-label="向下滚动"><Caret s={7} /></ScrollArrow>
        </VScroll>
      </SheetArea>

      <SheetBar>
        <SheetArrows><Caret dir="left" color="#bbb" s={7} /><Caret dir="right" color="#bbb" s={7} /></SheetArrows>
        <SheetTab $active>Sheet1</SheetTab>
        <SheetTab>Sheet2</SheetTab>
        <SheetTab>Sheet3</SheetTab>
        <AddSheet aria-label="新工作表"><svg width="17" height="17" fill="none" stroke="#888"><circle cx="8.500" cy="8.500" r="7.500" /><path d="M8.500 5v7M5 8.500h7" strokeWidth="2" /></svg></AddSheet>
        <HScroll>
          <Dots $w={22}><svg width="2" height="10"><path d="M0 0h2v2H0zM0 4h2v2H0zM0 8h2v2H0z" fill="#bbb" /></svg></Dots>
          <HTrack>
            <ScrollArrow $w={18} $h={18} aria-label="向左滚动"><Caret dir="left" s={8} color="#555" /></ScrollArrow>
            <HThumb />
            <ScrollArrow $w={17} $h={18} aria-label="向右滚动"><Caret dir="right" s={8} color="#555" /></ScrollArrow>
          </HTrack>
        </HScroll>
      </SheetBar>

      <StatusBar>
        <Ready>就绪</Ready>
        <Stats><span>平均值: 20</span><span>计数: 3</span><span>求和: 60</span></Stats>
        <ViewButton $active aria-label="普通"><svg width="17" height="17" fill="none" stroke="#a8a7a9"><path d="M1 1h15v15H1zM1 6h15M1 11h15M6 1v15M11 1v15" /></svg></ViewButton>
        <ViewButton aria-label="页面布局"><svg width="17" height="17" fill="none" stroke="#c9c8ca"><path d="M1 1h15v15H1zM4.500 3.500h8v11h-8zM6 6.500h5M6 9.500h5M6 12h5" /></svg></ViewButton>
        <ViewButton aria-label="分页预览"><svg width="17" height="17" fill="none" stroke="#c9c8ca"><path d="M1 1h15v15H1zM6.500 1v8M1 9.500h10M11.500 1v8" /></svg></ViewButton>
        <InputBar>
          <InputItem $w={29} aria-label="搜狗输入法"><Sogou s={29} /></InputItem>
          <InputItem>中</InputItem>
          <InputItem>°,</InputItem>
          <InputItem aria-label="表情"><svg width="16" height="16" fill="none" stroke="#1a73c4" strokeWidth="1.500"><circle cx="8" cy="8" r="7" /><path d="M4.500 9c1 4 6 4 7 0zM5.500 4.500v2.500M10.500 4.500v2.500" /></svg></InputItem>
          <InputItem aria-label="语音"><svg width="14" height="17" fill="none" stroke="#1a73c4" strokeWidth="1.600"><rect x="4.500" y="1" width="5" height="9" rx="2.500" fill="#1a73c4" /><path d="M1.500 7.500c0 7 11 7 11 0M7 12v4M4 16h6" /></svg></InputItem>
          <InputItem aria-label="键盘"><svg width="17" height="13"><path d="M0 0h17v13H0z" fill="#2b7fd0" /><path d="M2 3h13M2 6h13M2 10h13" stroke="#fff" strokeWidth="1.300" strokeDasharray="2 1" /></svg></InputItem>
          <InputItem aria-label="账户"><svg width="16" height="15" fill="#b9bac8"><circle cx="6" cy="3.500" r="3" /><path d="M0 13c0-8 9-8 10-4v4z" /><path d="M8.500 8.500h6v6h-6z" stroke="#fff" /></svg></InputItem>
          <InputItem aria-label="皮肤"><svg width="16" height="14" fill="#1a73c4"><path d="M4 0c2 2 6 2 8 0l4 3-2 4-2-1v8H4V6L2 7 0 3z" /></svg></InputItem>
          <InputItem $w={20} aria-label="工具箱"><svg width="15" height="14" fill="#1a73c4"><path d="M0 0h6v6H0zM0 8h6v6H0zM8 8h7v6H8z" /><path d="M9 1h5v4H9z" fill="none" stroke="#1a73c4" strokeWidth="1.500" /></svg></InputItem>
        </InputBar>
      </StatusBar>

      <Taskbar>
        <TaskButton $w={46} aria-label="开始"><svg width="20" height="18" fill="#fff"><path d="M0 3l9-1.500V8.500H0zM10 1.300L20 0v8.500H10zM0 9.500h9v7L0 15zM10 9.500h10V18l-10-1.500z" /></svg></TaskButton>
        <TaskButton $w={63} $pad={5} aria-label="文件资源管理器">
          <svg width="26" height="22"><path d="M0 1h10l2 2h13v18H0z" fill="#e5a52c" /><path d="M1 4h24v17H1z" fill="#fbd56b" /><path d="M5 21v-9h16v9h-4v-4H9v4z" fill="#3f97cc" /></svg>
        </TaskButton>
        <TaskButton $w={55} $active aria-label="Excel">
          <svg width="28" height="26"><path d="M7 1h20v24H7z" fill="#1f9a5b" /><path d="M17 1h10v8H17z" fill="#35c281" /><path d="M7 9h10v8H7z" fill="#147a43" /><path d="M7 17h20v8H7z" fill="#17693c" /><path d="M0 6h14v14H0z" fill="#107c41" /><path d="M4 9.500l6 7M10 9.500l-6 7" stroke="#fff" strokeWidth="1.800" /></svg>
        </TaskButton>
        <Tray>
          <TrayItem aria-label="显示隐藏的图标"><svg width="14" height="9" fill="none" stroke="#fff" strokeWidth="1.500"><path d="M1 8l6-6 6 6" /></svg></TrayItem>
          <TrayItem aria-label="录制"><svg width="20" height="20"><circle cx="10" cy="10" r="8.500" fill="#2a1a1e" stroke="#ddd" strokeWidth="1.800" /><circle cx="10" cy="10" r="5.500" fill="#e0221c" /></svg></TrayItem>
          <TrayItem aria-label="网络"><svg width="20" height="17" fill="none" stroke="#fff" strokeWidth="1.500"><path d="M6 2h13v10H5V8M9 16h8M12 12v4" /><path d="M1 1h4v5H1zM3 6v3" /></svg></TrayItem>
          <TrayItem>中</TrayItem>
          <TrayItem $w={36} aria-label="搜狗"><Sogou s={19} /></TrayItem>
          <Clock>16:39<br />2020/10/14</Clock>
          <TrayItem $w={49} $end={6} aria-label="通知">
            <svg width="29" height="30"><path d="M1 3h20v17H9l-3 4v-4H1z" fill="#fff" /><path d="M5 8h12M5 12h12M5 16h8" stroke="#8a8d9c" /><circle cx="18" cy="20" r="8.500" fill="#30323c" stroke="#999" strokeWidth="1.500" /><text x="18" y="25" textAnchor="middle" fontSize="14" fontWeight="700" fontFamily="Noto Sans" fill="#fff">3</text></svg>
          </TrayItem>
        </Tray>
      </Taskbar>

      <SideToggle aria-label="展开侧栏"><svg width="8" height="12" fill="none" stroke="#fff" strokeWidth="1.400"><path d="M6 1L2 6l4 5" /></svg></SideToggle>
      <EdgeWidget $top={849} $h={67} $bg="linear-gradient(#4a4a58 0 60%, #4f7a70 60% 90%, #4a4a58 90%)" />
      <EdgeWidget $top={961} $h={53} $bg="linear-gradient(#555 0 66%, #35a34c 66%)" />
      <Mark $x={1530} $y={96} width="62" height="62" aria-hidden="true"><path d="M61 1L43 7l4 2.500L.5 60 54.500 16l3 3z" fill="#fb3b3b" /></Mark>
      <Mark $x={444} $y={298} width="24" height="96" aria-hidden="true"><path d="M6 0L0 18l4-1 17 79L12 15h4z" fill="#fb3b3b" /></Mark>
      <Mark $x={1603} $y={82} width="14" height="20" aria-hidden="true"><path d="M1 1v15l4-3 2.500 6 3-1.500L8 12h5z" fill="#fff" stroke="#aaa" strokeWidth=".8" /></Mark>
    </Window>
  );
}
